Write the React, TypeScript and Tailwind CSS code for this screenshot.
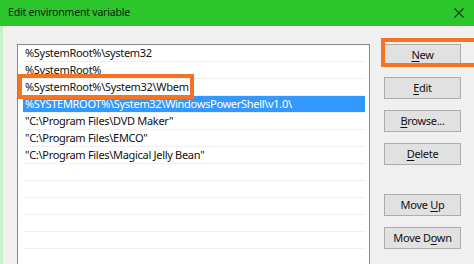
const rows = [
  "%SystemRoot%\\system32",
  "%SystemRoot%",
  "%SystemRoot%\\System32\\Wbem",
  "%SYSTEMROOT%\\System32\\WindowsPowerShell\\v1.0\\",
  "\"C:\\Program Files\\DVD Maker\"",
  "\"C:\\Program Files\\EMCO\"",
  "\"C:\\Program Files\\Magical Jelly Bean\"",
  "",
  "",
  "",
  "",
  "",
  "",
];

function Btn({ pre, key_, post, className = "" }: { pre: string; key_: string; post: string; className?: string }) {
  return (
    <div
      className={`w-[77px] h-[22px] flex items-center justify-center bg-[#e1e1e1] border border-[#adadad] text-[11px] tracking-[-0.3px] text-[#111] ${className}`}
    >
      <span>
        {pre}
        <span className="underline underline-offset-2">{key_}</span>
        {post}
      </span>
    </div>
  );
}

export default function App() {
  return (
    <div
      className="relative w-[474px] h-[264px] overflow-hidden bg-[#f0f0f0] flex flex-col"
      style={{ fontFamily: '"Noto Sans", "Open Sans", sans-serif' }}
    >
      {/* title bar */}
      <div className="h-[26px] shrink-0 bg-[#2cc52c] flex items-center justify-between pl-[8px] pr-[10px]">
        <span className="text-[10.5px] tracking-[-0.2px] text-[#0a220a]">Edit environment variable</span>
        <svg width="10" height="10" viewBox="0 0 10 10" className="text-[#0f3a0f]">
          <path d="M0.5 0.5 L9.5 9.5 M9.5 0.5 L0.5 9.5" stroke="currentColor" strokeWidth="1.2" />
        </svg>
      </div>

      {/* body */}
      <div className="flex-1 flex border-l-[3px] border-[#c6f2c6] pl-[14px] pt-[18px]">
        <div className="w-[353px] border border-[#828790] bg-white pl-[5px] pr-[4px]">
          {rows.map((r, i) => (
            <div
              key={i}
              className={`h-[17px] flex items-center px-[2px] text-[11px] tracking-[-0.3px] whitespace-nowrap border-b border-[#f0f0f0] ${
                i === 3 ? "bg-[#3399ff] text-white" : "text-[#111]"
              }`}
            >
              {r}
            </div>
          ))}
        </div>

        <div className="ml-[14px] flex flex-col">
          <Btn pre="" key_="N" post="ew" />
          <Btn pre="" key_="E" post="dit" className="mt-[11px]" />
          <Btn pre="" key_="B" post="rowse..." className="mt-[11px]" />
          <Btn pre="" key_="D" post="elete" className="mt-[11px]" />
          <Btn pre="Move " key_="U" post="p" className="mt-[29px]" />
          <Btn pre="Move D" key_="o" post="wn" className="mt-[11px]" />
        </div>
      </div>

      {/* highlight boxes */}
      <div className="absolute left-[18px] top-[74px] w-[176px] h-[25px] border-[4px] border-[#f47421]" />
      <div className="absolute left-[381px] top-[38px] w-[100px] h-[29px] border-[4px] border-[#f47421]" />
    </div>
  );
}
